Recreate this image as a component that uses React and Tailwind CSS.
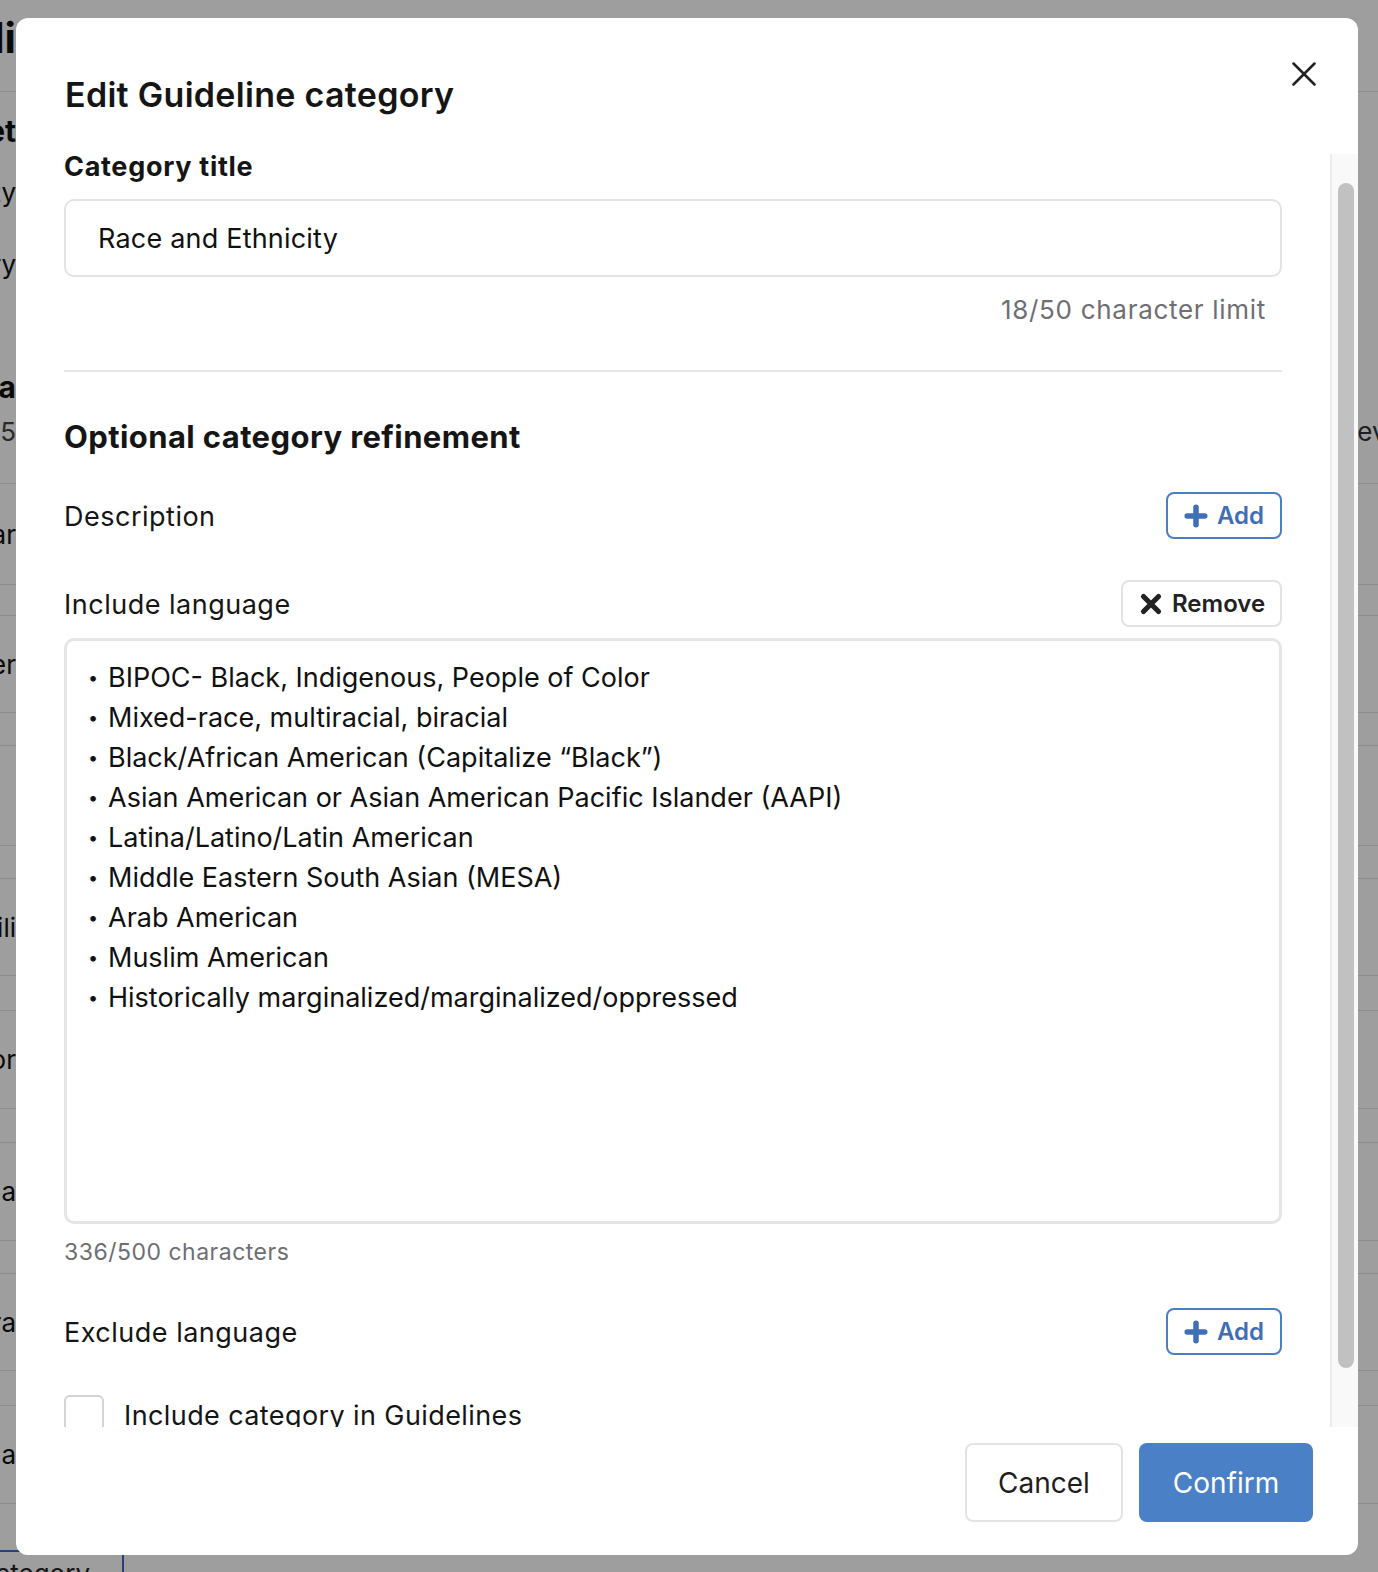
import React from "react";

function LeftFrag({ children, className = "" }) {
  return (
    <div className={"w-[16px] shrink-0 flex justify-end whitespace-nowrap " + className}>
      <span>{children}</span>
    </div>
  );
}

function PlusIcon() {
  return (
    <svg width="24" height="24" viewBox="0 0 24 24" fill="none">
      <path d="M12 3.2v17.6M3.2 12h17.6" stroke="#3f6fb4" strokeWidth="5.5" strokeLinecap="round" />
    </svg>
  );
}

function XBold() {
  return (
    <svg width="24" height="24" viewBox="0 0 24 24" fill="none">
      <path d="M4.5 4.5l15 15M19.5 4.5l-15 15" stroke="#222222" strokeWidth="5.2" strokeLinecap="round" />
    </svg>
  );
}

function AddButton() {
  return (
    <button className="w-[116px] h-[47px] border-2 border-[#4a7fc2] rounded-[8px] bg-white flex items-center pl-[16px] gap-[9px]">
      <PlusIcon />
      <span className="text-[24px] leading-[30px] font-semibold text-[#3f6fb4]">Add</span>
    </button>
  );
}

function Background() {
  return (
    <div className="absolute inset-0 flex flex-col bg-white text-[26px] text-[#111] font-['Inter',sans-serif]">
      <div className="h-[92px] shrink-0 flex items-center pb-[16px] border-b border-[#e3e3e3]">
        <LeftFrag className="text-[42px] font-bold">Guideli</LeftFrag>
      </div>
      <div className="h-[78px] shrink-0 flex items-center">
        <LeftFrag className="text-[30px] font-bold">Set</LeftFrag>
      </div>
      <div className="h-[44px] shrink-0 flex items-center">
        <LeftFrag>Priority</LeftFrag>
      </div>
      <div className="h-[100px] shrink-0 flex items-center">
        <LeftFrag>Category</LeftFrag>
      </div>
      <div className="h-[49px] shrink-0" />
      <div className="h-[48px] shrink-0 flex items-center">
        <LeftFrag className="text-[30px] font-bold">Media</LeftFrag>
      </div>
      <div className="h-[40px] shrink-0 flex items-center">
        <LeftFrag className="text-[#444]">125</LeftFrag>
        <div className="ml-auto w-[38px] shrink-0 whitespace-nowrap overflow-hidden text-[#333] pl-[1px]">Review</div>
      </div>
      <div className="h-[33px] shrink-0 border-b border-[#e3e3e3]" />
      <div className="h-[101px] shrink-0 flex items-center border-b border-[#e3e3e3]">
        <LeftFrag>Solar</LeftFrag>
      </div>
      <div className="h-[31px] shrink-0 border-b border-[#e3e3e3]" />
      <div className="h-[97px] shrink-0 flex items-center border-b border-[#e3e3e3]">
        <LeftFrag>Other</LeftFrag>
      </div>
      <div className="h-[33px] shrink-0 border-b border-[#e3e3e3]" />
      <div className="h-[100px] shrink-0 border-b border-[#e3e3e3]" />
      <div className="h-[33px] shrink-0 border-b border-[#e3e3e3]" />
      <div className="h-[97px] shrink-0 flex items-center border-b border-[#e3e3e3]">
        <LeftFrag>Mobili</LeftFrag>
      </div>
      <div className="h-[35px] shrink-0 border-b border-[#e3e3e3]" />
      <div className="h-[98px] shrink-0 flex items-center border-b border-[#e3e3e3]">
        <LeftFrag>Color</LeftFrag>
      </div>
      <div className="h-[34px] shrink-0 border-b border-[#e3e3e3]" />
      <div className="h-[98px] shrink-0 flex items-center border-b border-[#e3e3e3]">
        <LeftFrag>Gender a</LeftFrag>
      </div>
      <div className="h-[33px] shrink-0 border-b border-[#e3e3e3]" />
      <div className="h-[97px] shrink-0 flex items-center border-b border-[#e3e3e3]">
        <LeftFrag>Litera</LeftFrag>
      </div>
      <div className="h-[35px] shrink-0 border-b border-[#e3e3e3]" />
      <div className="h-[98px] shrink-0 flex items-center border-b border-[#e3e3e3]">
        <LeftFrag>Langua</LeftFrag>
      </div>
      <div className="h-[46px] shrink-0" />
      <div className="w-[124px] h-[40px] shrink-0 border-t-2 border-r-2 border-[#3b6fc0] flex justify-end pr-[32px] pt-[2px] whitespace-nowrap text-[#222]">
        <span>Category</span>
      </div>
    </div>
  );
}

const items = [
  "BIPOC- Black, Indigenous, People of Color",
  "Mixed-race, multiracial, biracial",
  "Black/African American (Capitalize \u201cBlack\u201d)",
  "Asian American or Asian American Pacific Islander (AAPI)",
  "Latina/Latino/Latin American",
  "Middle Eastern South Asian (MESA)",
  "Arab American",
  "Muslim American",
  "Historically marginalized/marginalized/oppressed",
];

export default function App() {
  return (
    <div className="relative w-[1378px] h-[1572px] overflow-hidden bg-white font-['Inter',sans-serif]">
      <Background />
      <div className="absolute inset-0 bg-[rgba(0,0,0,0.38)]" />

      <div className="absolute left-[16px] top-[18px] w-[1342px] h-[1537px] bg-white rounded-[12px] overflow-hidden flex flex-col text-[#151515]">
        {/* Header */}
        <div className="h-[136px] shrink-0 flex items-start justify-between pl-[49px] pr-[42px] pt-[44px]">
          <h2 className="mt-[13px] text-[34px] leading-[40px] font-semibold tracking-[0.3px]">Edit Guideline category</h2>
          <button className="w-[24px] h-[24px] flex items-center justify-center">
            <svg width="24" height="24" viewBox="0 0 24 24" fill="none">
              <path d="M1.5 1.5l21 21M22.5 1.5l-21 21" stroke="#222" strokeWidth="2.5" strokeLinecap="round" />
            </svg>
          </button>
        </div>

        {/* Body */}
        <div className="flex-1 min-h-0 flex">
          <div className="flex-1 min-w-0 overflow-hidden pl-[48px] pr-[48px]">
            <div className="-mt-[3px] text-[27px] leading-[32px] font-bold tracking-[0.7px]">Category title</div>
            <div className="mt-[16px] h-[78px] border-2 border-[#e3e3e3] rounded-[10px] flex items-center pl-[32px] pt-[2px] text-[27px] tracking-[0.2px] text-[#111]">
              Race and Ethnicity
            </div>
            <div className="mt-[17px] text-right pr-[16px] text-[26px] leading-[32px] tracking-[0.7px] text-[#6e6e73]">18/50 character limit</div>
            <div className="mt-[44px] h-[2px] bg-[#e6e6e6]" />
            <div className="mt-[47px] text-[31px] leading-[36px] font-bold tracking-[0.4px]">Optional category refinement</div>

            <div className="mt-[37px] h-[47px] flex items-center justify-between">
              <span className="text-[27px] tracking-[0.5px] pt-[3px]">Description</span>
              <AddButton />
            </div>

            <div className="mt-[41px] h-[47px] flex items-center justify-between">
              <span className="text-[27px] tracking-[0.5px] pt-[3px]">Include language</span>
              <button className="w-[161px] h-[47px] border-2 border-[#e3e3e3] rounded-[8px] bg-white flex items-center pl-[16px] gap-[9px]">
                <XBold />
                <span className="text-[24px] leading-[30px] font-semibold text-[#222]">Remove</span>
              </button>
            </div>

            <div className="mt-[11px] h-[586px] border-[3px] border-[#e5e5e5] rounded-[10px] pt-[17px] pl-[21px] text-[27px] leading-[40px] text-[#111]">
              {items.map((t) => (
                <div key={t} className="flex items-center">
                  <span className="w-[20px] shrink-0 text-[18px] leading-[40px]">{"\u2022"}</span>
                  <span className="whitespace-nowrap">{t}</span>
                </div>
              ))}
            </div>

            <div className="mt-[14px] text-[23px] leading-[28px] tracking-[0.5px] text-[#6e6e73]">336/500 characters</div>

            <div className="mt-[42px] h-[47px] flex items-center justify-between">
              <span className="text-[27px] tracking-[0.5px] pt-[3px]">Exclude language</span>
              <AddButton />
            </div>

            <div className="mt-[38px] flex items-center gap-[20px]">
              <div className="w-[40px] h-[40px] border-2 border-[#d4d4d4] rounded-[6px] shrink-0" />
              <span className="text-[27px] tracking-[0.4px] mt-[3px]">Include category in Guidelines</span>
            </div>
            <div className="h-[200px]" />
          </div>

          {/* Scrollbar */}
          <div className="w-[28px] shrink-0 bg-[#f9f9f9] border-l-2 border-[#ececec] pt-[29px] pb-[59px] pl-[6px] pr-[4px]">
            <div className="h-full rounded-full bg-[#c1c1c1]" />
          </div>
        </div>

        {/* Footer */}
        <div className="h-[128px] shrink-0 flex justify-end items-start gap-[16px] pt-[16px] pr-[45px]">
          <button className="w-[158px] h-[79px] border-2 border-[#e4e4e4] rounded-[8px] bg-white text-[28px] text-[#1e1e1e]">
            Cancel
          </button>
          <button className="w-[174px] h-[79px] rounded-[8px] bg-[#4a80c6] text-[28px] text-white">
            Confirm
          </button>
        </div>
      </div>
    </div>
  );
}
